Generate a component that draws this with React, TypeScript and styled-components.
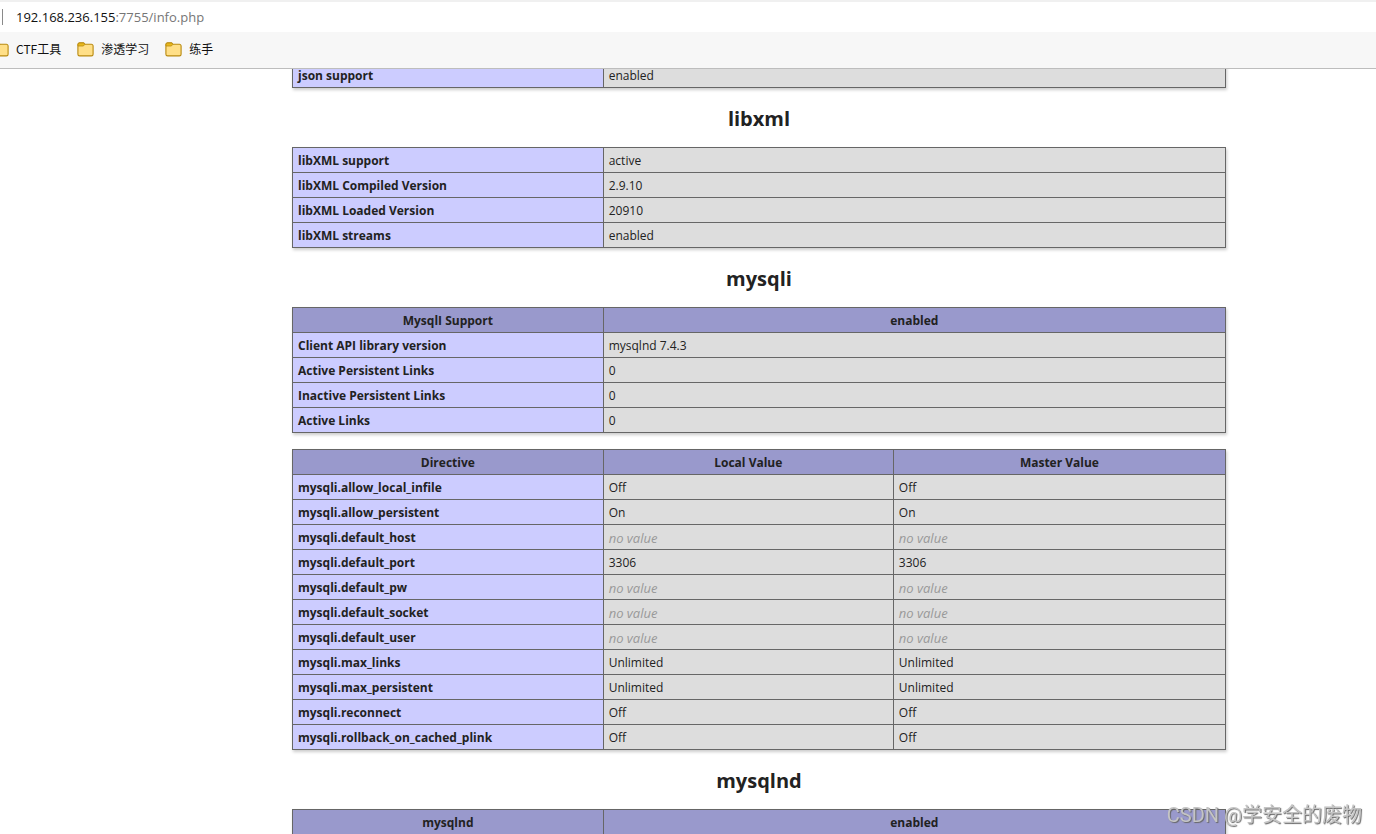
import React from "react";
import styled, { createGlobalStyle } from "styled-components";

const GlobalStyle = createGlobalStyle`
  *, *::before, *::after { box-sizing: border-box; }
  body {
    margin: 0;
    background: #fff;
    color: #222;
    font-family: "Open Sans", "Noto Sans", "Noto Sans CJK SC", sans-serif;
    font-size: 12px;
    line-height: 16px;
  }
`;

const Shell = styled.div`
  display: flex;
  flex-direction: column;
  height: 100vh;
  overflow: hidden;
`;

const AddressBar = styled.header`
  display: flex;
  align-items: center;
  flex: none;
  height: 32px;
  padding-left: 2px;
  border-top: 2px solid #f0f0f0;
  background: #fff;
`;

const Address = styled.div`
  flex: 1;
  height: 16px;
  padding-left: 13px;
  border-left: 1px solid #8a8a8a;
  color: #767676;
  font-size: 13px;
  line-height: 16px;
`;

const Host = styled.span`
  color: #111;
`;

const Bookmarks = styled.nav`
  display: flex;
  align-items: center;
  gap: 16px;
  flex: none;
  height: 37px;
  padding-bottom: 2px;
  border-bottom: 1px solid #bdbdbd;
  background: #f7f7f7;
  overflow: hidden;
`;

const Bookmark = styled.a<{ $cut?: boolean }>`
  display: flex;
  align-items: center;
  gap: 7px;
  margin-left: ${(p) => (p.$cut ? "-8px" : "0")};
  color: #111;
  font-family: "Noto Sans CJK SC", sans-serif;
  font-size: 12px;
  text-decoration: none;
  white-space: nowrap;
`;

const Page = styled.main`
  flex: 1;
  min-height: 0;
  overflow: hidden;
  padding: 0 150px 0 292px;
`;

const Scrolled = styled.div`
  margin-top: -7px;
`;

const Title = styled.h2`
  margin: 17px 0 15px;
  font-size: 20px;
  font-weight: 700;
  line-height: 27px;
  text-align: center;
`;

const Table = styled.table`
  width: 100%;
  margin-bottom: 16px;
  border-collapse: collapse;
  table-layout: fixed;
  box-shadow: 1px 2px 3px #ccc;
`;

const NameCol = styled.col`
  width: 33.3%;
`;

const LocalCol = styled.col`
  width: 31.1%;
`;

const HeadCell = styled.th`
  padding: 5px 5px 3px;
  border: 1px solid #666;
  background: #9999cc;
  font-weight: 700;
  text-align: center;
`;

const NameCell = styled.th`
  padding: 5px 5px 3px;
  border: 1px solid #666;
  background: #ccccff;
  font-weight: 700;
  text-align: left;
`;

const ValueCell = styled.td`
  padding: 5px 5px 3px;
  border: 1px solid #666;
  background: #ddd;
`;

const NoValue = styled.i`
  display: block;
  color: #999;
  font-size: 13px;
`;

const Watermark = styled.div`
  position: fixed;
  right: 14px;
  bottom: 4px;
  color: #c4c4c4;
  font-family: Roboto, "Noto Sans CJK SC", sans-serif;
  font-size: 20px;
  line-height: 30px;
  text-shadow: 1px 1px 1px #666;
`;

const FolderIcon = () => (
  <svg width="17" height="15" viewBox="0 0 17 15" aria-hidden="true">
    <path
      d="M.9 3.2v9A1.7 1.7 0 0 0 2.6 13.9h11.8a1.7 1.7 0 0 0 1.7-1.7V4a1.7 1.7 0 0 0-1.7-1.7H8L6.6.9H2.6A1.7 1.7 0 0 0 .9 2.6z"
      fill="#ffdf87"
      stroke="#b98a10"
      strokeWidth="1.1"
    />
    <path d="M1 2.6A1.6 1.6 0 0 1 2.6 1h4l1.2 1.300L6.4 4H1z" fill="#e9b91c" stroke="#b98a10" strokeWidth=".8" />
  </svg>
);

type InfoTableProps = { head?: string[]; rows: string[][] };

const InfoTable = ({ head, rows }: InfoTableProps) => {
  const columns = (head ?? rows[0]).length;
  return (
    <Table>
      <colgroup>
        <NameCol />
        {columns === 3 && <LocalCol />}
        <col />
      </colgroup>
      {head && (
        <thead>
          <tr>
            {head.map((text) => (
              <HeadCell key={text} scope="col">{text}</HeadCell>
            ))}
          </tr>
        </thead>
      )}
      <tbody>
        {rows.map(([name, ...values]) => (
          <tr key={name}>
            <NameCell scope="row">{name}</NameCell>
            {values.map((value, i) => (
              <ValueCell key={i}>{value || <NoValue>no value</NoValue>}</ValueCell>
            ))}
          </tr>
        ))}
      </tbody>
    </Table>
  );
};

const bookmarks = ["CTF工具", "渗透学习", "练手"];

const libxml = [
  ["libXML support", "active"],
  ["libXML Compiled Version", "2.9.10"],
  ["libXML Loaded Version", "20910"],
  ["libXML streams", "enabled"],
];

const mysqli = [
  ["Client API library version", "mysqlnd 7.4.3"],
  ["Active Persistent Links", "0"],
  ["Inactive Persistent Links", "0"],
  ["Active Links", "0"],
];

const directives = [
  ["mysqli.allow_local_infile", "Off", "Off"],
  ["mysqli.allow_persistent", "On", "On"],
  ["mysqli.default_host", "", ""],
  ["mysqli.default_port", "3306", "3306"],
  ["mysqli.default_pw", "", ""],
  ["mysqli.default_socket", "", ""],
  ["mysqli.default_user", "", ""],
  ["mysqli.max_links", "Unlimited", "Unlimited"],
  ["mysqli.max_persistent", "Unlimited", "Unlimited"],
  ["mysqli.reconnect", "Off", "Off"],
  ["mysqli.rollback_on_cached_plink", "Off", "Off"],
];

export default function App() {
  return (
    <>
      <GlobalStyle />
      <Shell>
        <AddressBar>
          <Address>
            <Host>192.168.236.155</Host>:7755/info.php
          </Address>
        </AddressBar>
        <Bookmarks>
          {bookmarks.map((name, i) => (
            <Bookmark key={name} href="#" $cut={i === 0}>
              <FolderIcon />
              {name}
            </Bookmark>
          ))}
        </Bookmarks>
        <Page>
          <Scrolled>
            <InfoTable rows={[["json support", "enabled"]]} />
            <Title>libxml</Title>
            <InfoTable rows={libxml} />
            <Title>mysqli</Title>
            <InfoTable head={["MysqlI Support", "enabled"]} rows={mysqli} />
            <InfoTable head={["Directive", "Local Value", "Master Value"]} rows={directives} />
            <Title>mysqlnd</Title>
            <InfoTable head={["mysqlnd", "enabled"]} rows={[]} />
          </Scrolled>
        </Page>
      </Shell>
      <Watermark>CSDN @学安全的废物</Watermark>
    </>
  );
}
